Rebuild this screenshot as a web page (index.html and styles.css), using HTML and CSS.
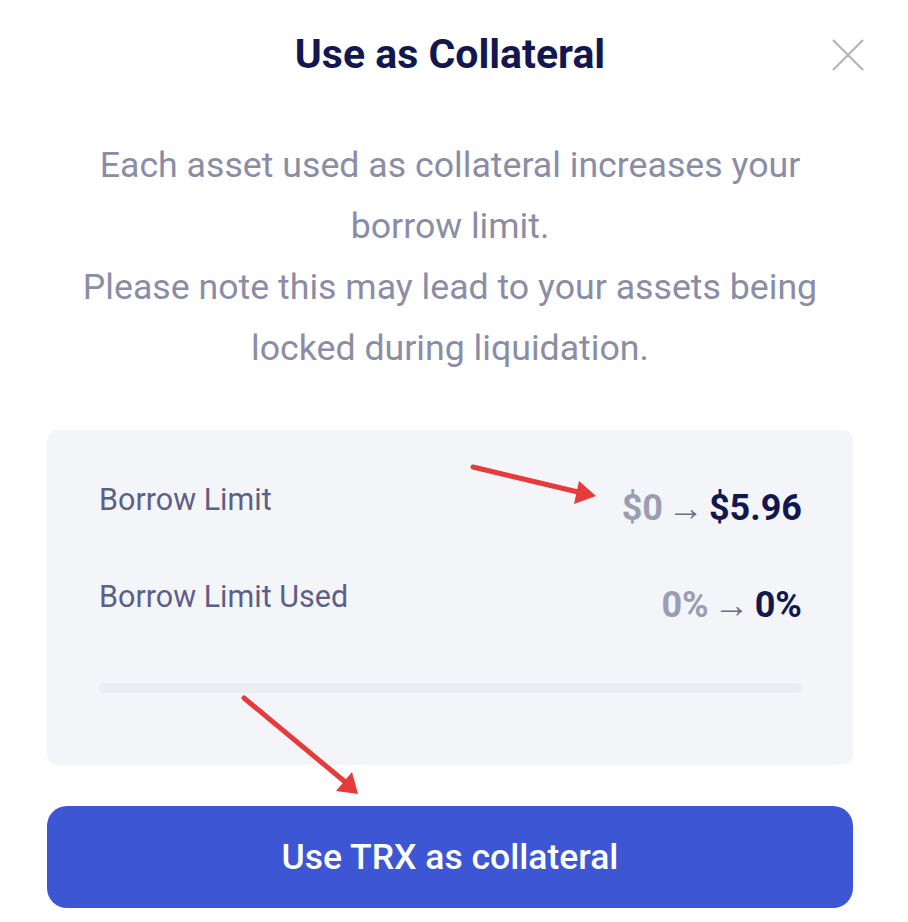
FILE: index.html
```html
<!DOCTYPE html>
<html>
<head>
<meta charset="utf-8">
<title>Use as Collateral</title>
<link rel="stylesheet" href="styles.css">
</head>
<body>
<div class="modal">
  <div class="header">
    <h1 class="title">Use as Collateral</h1>
    <button class="close" aria-label="Close">
      <svg width="34" height="34" viewBox="0 0 34 34">
        <path d="M2 2 L32 32 M32 2 L2 32" stroke="#b5b5b5" stroke-width="2.2" fill="none"/>
      </svg>
    </button>
  </div>
  <p class="note">
    Each asset used as collateral increases your borrow limit.<br>
    Please note this may lead to your assets being locked during liquidation.
  </p>
  <div class="summary">
    <div class="row">
      <span class="label">Borrow Limit</span>
      <span class="value"><span class="from">$0</span><span class="arrow">→</span><span class="to">$5.96</span></span>
    </div>
    <div class="row">
      <span class="label">Borrow Limit Used</span>
      <span class="value"><span class="from">0%</span><span class="arrow">→</span><span class="to">0%</span></span>
    </div>
    <div class="bar"><div class="fill" style="width: 0%"></div></div>
  </div>
  <button class="submit">Use TRX as collateral</button>
</div>
<!-- red markers drawn over the dialog -->
<svg class="marks" width="908" height="922" viewBox="0 0 908 922">
  <g stroke="#e63b3b" stroke-width="5" stroke-linecap="round">
    <line x1="473" y1="467" x2="578" y2="492"/>
    <line x1="244" y1="698" x2="344" y2="781"/>
  </g>
  <g fill="#e63b3b">
    <polygon points="579,481 596,496 574,504"/>
    <polygon points="352,772 358,794 336,791"/>
  </g>
</svg>
</body>
</html>
```

FILE: styles.css
```css
body {
  margin: 0;
  background: #fff;
  font-family: Roboto, "Liberation Sans", sans-serif;
}
.modal {
  width: 806px;
  padding: 24px 47px 14px;
}
.header {
  position: relative;
  height: 60px;
  text-align: center;
}
.title {
  margin: 0;
  font-size: 41px;
  line-height: 60px;
  font-weight: 700;
  color: #13174f;
}
.close {
  position: absolute;
  right: -12px;
  top: 14px;
  padding: 0;
  border: 0;
  background: none;
  cursor: pointer;
}
.close svg {
  display: block;
}
.note {
  margin: 51px auto;
  width: 780px;
  font-size: 35.7px;
  line-height: 61px;
  text-align: center;
  color: #8b8da6;
}
.summary {
  background: #f4f5f9;
  border-radius: 10px;
  padding: 50px 51px 72px 52px;
}
.row {
  display: flex;
  justify-content: space-between;
  align-items: flex-start;
  margin-bottom: 41px;
}
.row + .row {
  margin-bottom: 50px;
}
.label {
  font-size: 30.5px;
  line-height: 40px;
  color: #5c5f87;
}
.value {
  font-size: 36px;
  line-height: 56px;
  font-weight: 700;
  display: flex;
  align-items: center;
}
.from {
  color: #9b9db2;
}
.arrow {
  margin: 0 5px;
  font-size: 36px;
  font-weight: 400;
  color: #6c6f88;
}
.to {
  color: #13174f;
}
.bar {
  height: 10px;
  border-radius: 5px;
  background: #eceef3;
}
.fill {
  height: 100%;
  border-radius: 5px;
  background: #3d57d4;
}
.submit {
  display: block;
  width: 100%;
  height: 102px;
  margin-top: 41px;
  border: 0;
  border-radius: 20px;
  background: #3d57d4;
  color: #fff;
  font-family: inherit;
  font-size: 35.5px;
  font-weight: 500;
  cursor: pointer;
}
.marks {
  position: absolute;
  left: 0;
  top: 0;
  pointer-events: none;
}
```
